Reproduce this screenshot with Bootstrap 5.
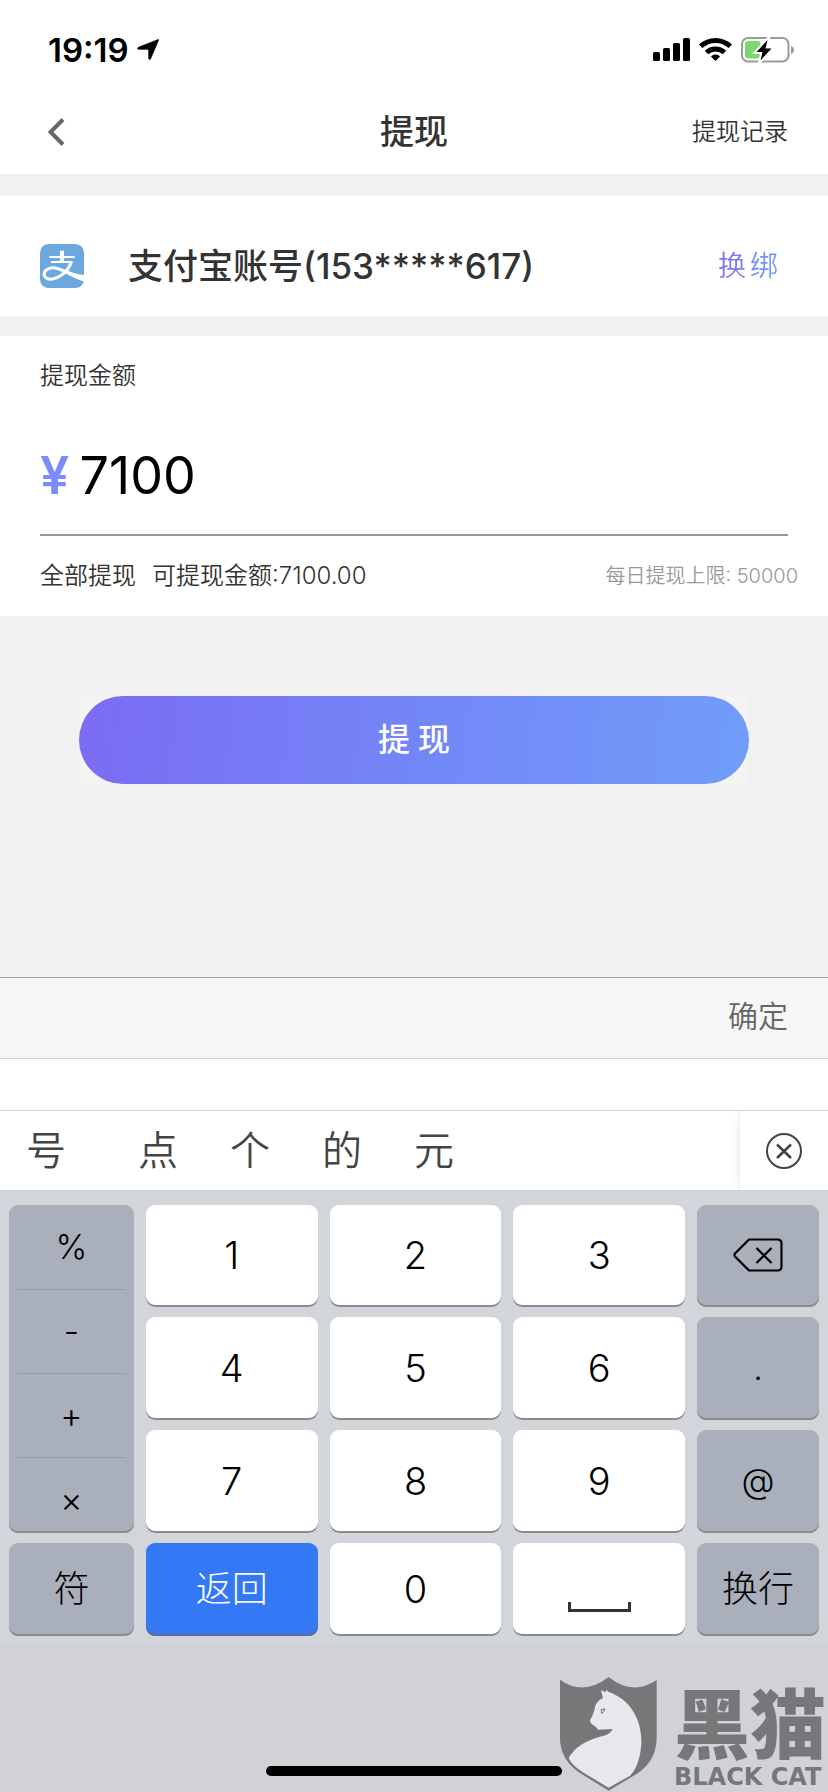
<!DOCTYPE html>
<html lang="zh-CN">
<head>
<meta charset="utf-8">
<meta name="viewport" content="width=device-width, initial-scale=1">
<title>提现</title>
<link rel="stylesheet" href="https://cdn.jsdelivr.net/npm/bootstrap@5.3.0/dist/css/bootstrap.min.css">
<style>
  body { font-family: Inter, "Noto Sans CJK SC", sans-serif; font-size: 24px; font-weight: 350; line-height: 36px; color: #333; background: #f1f1f1; }
  a, a:hover { color: inherit; text-decoration: none; }
  svg { display: block; flex: none; }
  .gutter { padding-left: 40px; padding-right: 40px; }
  .status-bar { height: 88px; padding: 12px 34px 0 48px; color: #000; }
  .clock { font-size: 33px; font-weight: 600; }
  .title-bar { height: 86px; padding-top: 2px; }
  .title-bar h1 { font-size: 34px; font-weight: 500; line-height: 48px; }
  .account { height: 120px; margin: 22px 0 20px; padding-top: 20px; }
  .account-name { font-size: 35px; font-weight: 500; line-height: 52px; margin-left: 44px; }
  .rebind { font-size: 28px; margin-right: 10px; background: linear-gradient(100deg, #7b6cf3, #719df9); -webkit-background-clip: text; background-clip: text; }
  .rebind, .rebind:hover { color: transparent; }
  .amount-card { padding-top: 22px; padding-bottom: 22px; }
  .amount-row { margin-top: 46px; padding-bottom: 22px; border-bottom: 2px solid #979797; font-size: 52px; line-height: 72px; }
  .yen { color: #7b8bfb; font-weight: 600; width: 36px; }
  .amount-row input { border: 0; background: none; color: #000; font-weight: 400; padding: 0; height: 72px; min-width: 0; outline: 0; }
  .limits { margin-top: 22px; margin-right: -10px; }
  .limit-note { font-size: 20px; color: #999; }
  .action { padding: 80px 79px; }
  .submit-box { background: #f4f4f4; }
  .submit { height: 88px; border: 0; border-radius: 44px; background: linear-gradient(97deg, #7b6cf3, #7386f7 50%, #719df9); color: #fff; font-size: 32px; font-weight: 500; }
  .accessory { height: 82px; background: #f6f6f6; border-top: 1px solid #a3a3a3; border-bottom: 1px solid #d5d5d5; padding-bottom: 4px; }
  .accessory button { font-size: 30px; color: #666; }
  .compose { height: 51px; }
  .candidates { height: 80px; border-top: 1px solid #d0d0d0; color: #444; }
  .plain { border: 0; background: none; padding: 0; color: inherit; font-weight: inherit; }
  .cand { width: 92px; font-size: 40px; line-height: 56px; }
  .cand:first-child { margin-right: 20px; }
  .dismiss { width: 89px; border-left: 1px solid #f0f0f0; box-shadow: -6px 0 10px -8px rgba(0,0,0,.15); }
  .keyboard { background: #d2d5da; padding: 15px 9px 6px; }
  .keys { display: grid; grid-template-columns: 125fr 172fr 172fr 172fr 122fr; grid-template-rows: 102px 103px 103px 93px; gap: 10px 12px; }
  .key { border: 0; border-radius: 9px; background: #fff; color: #000; font-size: 38px; line-height: 48px; font-weight: 300; padding: 0 0 2px; box-shadow: inset 0 -2px #888b8f; display: flex; align-items: center; justify-content: center; }
  .key.gray { background: #aab0bb; font-size: 34px; }
  .key.word { font-size: 36px; }
  .key.blue { background: #3478f6; color: #fff; box-shadow: inset 0 -2px #5f6e8c; }
  .symbols { grid-row: span 3; border-radius: 9px; background: #aab0bb; box-shadow: inset 0 -2px #888b8f; padding: 0 8px; }
  .symbols button { flex: 0 0 84px; color: #000; font-size: 34px; font-weight: 300; }
  .symbols button + button { border-top: 1px solid #989ca4; }
  .home-area { height: 150px; background: #d1d2d8; padding-bottom: 16px; }
  .home-bar { width: 296px; height: 10px; border-radius: 5px; background: #000; }
  .watermark { right: 2px; bottom: 0; color: #77777a; gap: 16px; }
  .wm-cn { font-family: "Noto Sans CJK SC", sans-serif; font-size: 76px; font-weight: 900; line-height: 84px; }
  .wm-en { font-family: "DejaVu Sans", sans-serif; font-size: 24px; font-weight: 700; line-height: 30px; }
</style>
</head>
<body>
<div class="d-flex flex-column min-vh-100">
  <div class="status-bar bg-white d-flex align-items-center justify-content-between">
    <div class="d-flex align-items-center gap-2">
      <span class="clock">19:19</span>
      <svg width="22" height="22" viewBox="0 0 66 66"><path d="M62 2Q66 0 64 5L41 59Q38 65 35 59V35Q35 31 31 31H4Q-1 28 4 25Z" fill="#000" stroke="#000" stroke-width="2"/></svg>
    </div>
    <svg width="142" height="26" viewBox="0 0 142 26">
      <g fill="#000">
        <rect x="1" y="15" width="7" height="9" rx="1.5"/><rect x="11" y="11" width="7" height="13" rx="1.5"/><rect x="21" y="6" width="7" height="18" rx="1.5"/><rect x="31" y="1" width="7" height="23" rx="1.5"/>
        <path d="M63.500 24l-4.600-4.600a6.600 6.600 0 0 1 9.200 0Z"/>
      </g>
      <g fill="none" stroke="#000" stroke-width="5"><path d="M54.500 15.500a13 13 0 0 1 18 0"/><path d="M48.700 9.300a21.500 21.500 0 0 1 29.600 0"/></g>
      <rect x="90" y="1" width="46.500" height="23.500" rx="6" fill="none" stroke="#9a9a9a" stroke-width="2"/>
      <path d="M139 9q3 1 3 4t-3 4Z" fill="#9a9a9a"/>
      <rect x="93" y="4" width="15.500" height="17.500" rx="3" fill="#78d970"/>
      <path d="M115.500 3L104.500 15h6L108.500 23.500 119.500 11.500h-6Z" fill="#000" stroke="#fff" stroke-width="4" paint-order="stroke"/>
    </svg>
  </div>

  <header class="title-bar gutter bg-white d-flex align-items-center">
    <div class="col d-flex">
      <button class="plain ps-2" aria-label="返回"><svg width="17" height="28" viewBox="0 0 17 28"><path d="M15 1.500L2.500 14 15 26.500" fill="none" stroke="#666" stroke-width="4"/></svg></button>
    </div>
    <h1 class="m-0">提现</h1>
    <div class="col text-end"><a href="#">提现记录</a></div>
  </header>

  <section class="account gutter bg-white d-flex align-items-center">
    <svg width="44" height="44" viewBox="0 0 132 132" aria-label="支付宝">
      <rect width="132" height="132" rx="26" fill="#6aa8de"/>
      <g fill="none" stroke="#fff"><path d="M28 39H104M33 54H98" stroke-width="6"/><path d="M66 20V54" stroke-width="12"/><path d="M94 54Q86 78 64 94C46 107 22 111 14 97C7 82 24 70 42 71C68 73 90 94 132 107" stroke-width="9"/></g>
      <path d="M74 76Q100 90 132 93V112Q104 103 70 84Z" fill="#fff"/>
    </svg>
    <div class="account-name flex-grow-1">支付宝账号(153*****617)</div>
    <a class="rebind" href="#">换<span class="ms-1">绑</span></a>
  </section>

  <main class="flex-grow-1">
    <section class="amount-card gutter bg-white">
      <label for="amount" class="d-block">提现金额</label>
      <div class="amount-row d-flex gap-2">
        <span class="yen">¥</span>
        <input id="amount" class="flex-grow-1" type="text" inputmode="decimal" value="7100">
      </div>
      <div class="limits d-flex align-items-center">
        <a href="#">全部提现</a>
        <span class="ms-3 flex-grow-1">可提现金额:7100.00</span>
        <span class="limit-note">每日提现上限: 50000</span>
      </div>
    </section>
    <div class="action">
      <div class="submit-box"><button class="submit w-100">提<span class="ms-2">现</span></button></div>
    </div>
  </main>

  <footer>
    <div class="accessory gutter d-flex align-items-center justify-content-end"><button class="plain">确定</button></div>
    <div class="compose bg-white"></div>
    <div class="candidates bg-white d-flex overflow-hidden">
      <div class="d-flex flex-grow-1">
        <button class="plain cand">号</button><button class="plain cand">点</button><button class="plain cand">个</button><button class="plain cand">的</button><button class="plain cand">元</button>
      </div>
      <button class="plain dismiss d-flex align-items-center justify-content-center" aria-label="关闭"><svg width="36" height="36" viewBox="0 0 36 36" fill="none" stroke="#444"><circle cx="18" cy="18" r="17" stroke-width="2"/><path d="M11 11.500L25 25M25 11.500L11 25" stroke-width="2.600"/></svg></button>
    </div>
    <div class="keyboard">
      <div class="keys">
        <div class="symbols d-flex flex-column"><button class="plain">%</button><button class="plain">-</button><button class="plain">+</button><button class="plain">×</button></div>
        <button class="key">1</button><button class="key">2</button><button class="key">3</button>
        <button class="key gray" aria-label="删除"><svg width="50" height="34" viewBox="0 0 50 34" fill="none" stroke="#000" stroke-width="2.200"><path d="M16 1.500H44.500Q48.500 1.500 48.500 5.500V28.500Q48.500 32.500 44.500 32.500H16L2 18.500Q.8 17 2 15.500Z" stroke-linejoin="round"/><path d="M23.500 10L38.500 25M38.500 10L23.500 25"/></svg></button>
        <button class="key">4</button><button class="key">5</button><button class="key">6</button><button class="key gray">.</button>
        <button class="key">7</button><button class="key">8</button><button class="key">9</button><button class="key gray">@</button>
        <button class="key gray word">符</button><button class="key blue word">返回</button><button class="key">0</button>
        <button class="key" aria-label="空格"><svg width="63" height="46" viewBox="0 0 63 46"><path d="M1.500 36V44.500H61.500V36" fill="none" stroke="#333" stroke-width="3"/></svg></button>
        <button class="key gray word">换行</button>
      </div>
    </div>
    <div class="home-area position-relative d-flex align-items-end justify-content-center">
      <div class="home-bar"></div>
      <div class="watermark position-absolute d-flex align-items-end">
        <svg width="99" height="116" viewBox="91 109 297 348">
          <path d="M94 120Q165 170 240 112Q312 170 384 121V298Q382 375 305 414L240 453L160 404Q96 365 94 298Z" fill="#77777a"/>
          <path d="M217 151L230 158 234 150 239 156C306 180 340 240 338 310C336 352 324 390 303 409L240 444 166 400Q130 378 120 356C148 306 200 296 232 286Q246 280 253 268L208 270C204 260 182 254 184 242Q192 230 197 212C200 192 208 182 223 176Z" fill="#e7e8ec"/>
          <path d="M212 214Q218 204 230 207Q228 220 216 222Q220 214 218 211Z" fill="#77777a"/><circle cx="223" cy="213" r="3" fill="#e7e8ec"/>
        </svg>
        <div class="text-nowrap"><div class="wm-cn">黑猫</div><div class="wm-en">BLACK CAT</div></div>
      </div>
    </div>
  </footer>
</div>
<script src="https://cdn.jsdelivr.net/npm/bootstrap@5.3.0/dist/js/bootstrap.bundle.min.js"></script>
</body>
</html>
